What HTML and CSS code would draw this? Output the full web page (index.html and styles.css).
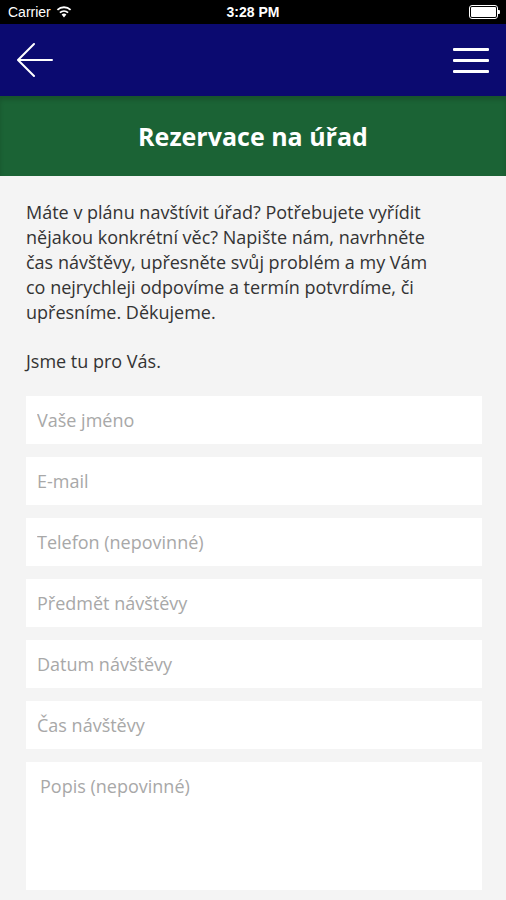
FILE: index.html
```html
<!DOCTYPE html>
<html lang="cs">
<head>
    <meta charset="UTF-8">
    <meta name="viewport" content="width=device-width, initial-scale=1.0">
    <title>Rezervace na úřad</title>
    <link rel="stylesheet" href="styles.css">
</head>
<body>
    <div class="status-bar">
        <div class="status-left">
            <span>Carrier</span>
            <svg class="wifi" width="16" height="12" viewBox="0 0 16 12">
                <path d="M8 11.5 L5.6 8.6 A3.6 3.6 0 0 1 10.4 8.6 Z" fill="#fff"/>
                <path d="M3.9 6.6 A6.2 6.2 0 0 1 12.1 6.6" stroke="#fff" stroke-width="1.8" fill="none"/>
                <path d="M1.4 3.9 A9.6 9.6 0 0 1 14.6 3.9" stroke="#fff" stroke-width="1.8" fill="none"/>
            </svg>
        </div>
        <div class="status-time">3:28 PM</div>
        <div class="status-right">
            <div class="battery"><div class="battery-level"></div></div>
            <div class="battery-nub"></div>
        </div>
    </div>

    <header class="navbar">
        <svg class="back-icon" width="36" height="36" viewBox="0 0 36 36">
            <path d="M35 18 H2 M17 2 L1 18 L17 34" stroke="#fff" stroke-width="2" fill="none" stroke-linecap="round" stroke-linejoin="round"/>
        </svg>
        <div class="menu-icon">
            <span></span>
            <span></span>
            <span></span>
        </div>
    </header>

    <div class="title-bar">
        <h1>Rezervace na úřad</h1>
    </div>

    <div class="content">
        <p class="intro">Máte v plánu navštívit úřad? Potřebujete vyřídit<br>
            nějakou konkrétní věc? Napište nám, navrhněte<br>
            čas návštěvy, upřesněte svůj problém a my Vám<br>
            co nejrychleji odpovíme a termín potvrdíme, či<br>
            upřesníme. Děkujeme.</p>
        <p>Jsme tu pro Vás.</p>

        <form class="booking-form">
            <input type="text" placeholder="Vaše jméno">
            <input type="email" placeholder="E-mail">
            <input type="tel" placeholder="Telefon (nepovinné)">
            <input type="text" placeholder="Předmět návštěvy">
            <input type="text" placeholder="Datum návštěvy">
            <input type="text" placeholder="Čas návštěvy">
            <textarea placeholder="Popis (nepovinné)"></textarea>
        </form>
    </div>
</body>
</html>
```

FILE: styles.css
```css
body {
    font-family: "Open Sans", "Noto Sans", sans-serif;
    margin: 0;
    padding: 0;
    background-color: #f4f4f4;
    color: #333;
}
.status-bar {
    height: 24px;
    background-color: #000;
    color: #fff;
    display: flex;
    justify-content: space-between;
    align-items: center;
    padding: 0 6px 0 8px;
    font-family: "Liberation Sans", Arial, sans-serif;
    font-size: 14px;
    position: relative;
}
.status-left {
    display: flex;
    align-items: center;
    gap: 5px;
}
.status-time {
    position: absolute;
    left: 0;
    right: 0;
    text-align: center;
    font-weight: bold;
    pointer-events: none;
}
.status-right {
    display: flex;
    align-items: center;
}
.battery {
    width: 25px;
    height: 10px;
    border: 1px solid #fff;
    border-radius: 3px;
    padding: 1px;
}
.battery-level {
    width: 100%;
    height: 100%;
    background-color: #fff;
    border-radius: 1px;
}
.battery-nub {
    width: 2px;
    height: 4px;
    background-color: #fff;
    border-radius: 0 1px 1px 0;
}
.navbar {
    height: 72px;
    background-color: #0b0a70;
    display: flex;
    justify-content: space-between;
    align-items: center;
    padding: 0 17px 0 17px;
}
.menu-icon {
    width: 36px;
    display: flex;
    flex-direction: column;
    gap: 8px;
}
.menu-icon span {
    display: block;
    height: 3px;
    background-color: #fff;
    border-radius: 1px;
}
.title-bar {
    height: 80px;
    background-color: #1b6335;
    display: flex;
    align-items: center;
    justify-content: center;
    box-shadow: inset 0 4px 4px rgba(0, 0, 0, 0.15);
}
h1 {
    margin: 0;
    color: #fff;
    font-size: 25px;
    font-weight: bold;
}
.content {
    padding: 24px 24px 0 26px;
}
p {
    margin: 0 0 24px 0;
    font-size: 18px;
    line-height: 25px;
}
.intro {
    white-space: nowrap;
}
.booking-form {
    display: flex;
    flex-direction: column;
    gap: 13px;
    margin-top: -2px;
}
input, textarea {
    font-family: inherit;
    font-size: 18px;
    color: #333;
    background-color: #fff;
    border: none;
    border-radius: 0;
    margin: 0;
    box-sizing: border-box;
    width: 100%;
    outline: none;
}
input {
    height: 48px;
    padding: 0 11px;
}
textarea {
    height: 128px;
    padding: 12px 14px;
    resize: none;
}
::placeholder {
    color: #a8a8a8;
}
```
